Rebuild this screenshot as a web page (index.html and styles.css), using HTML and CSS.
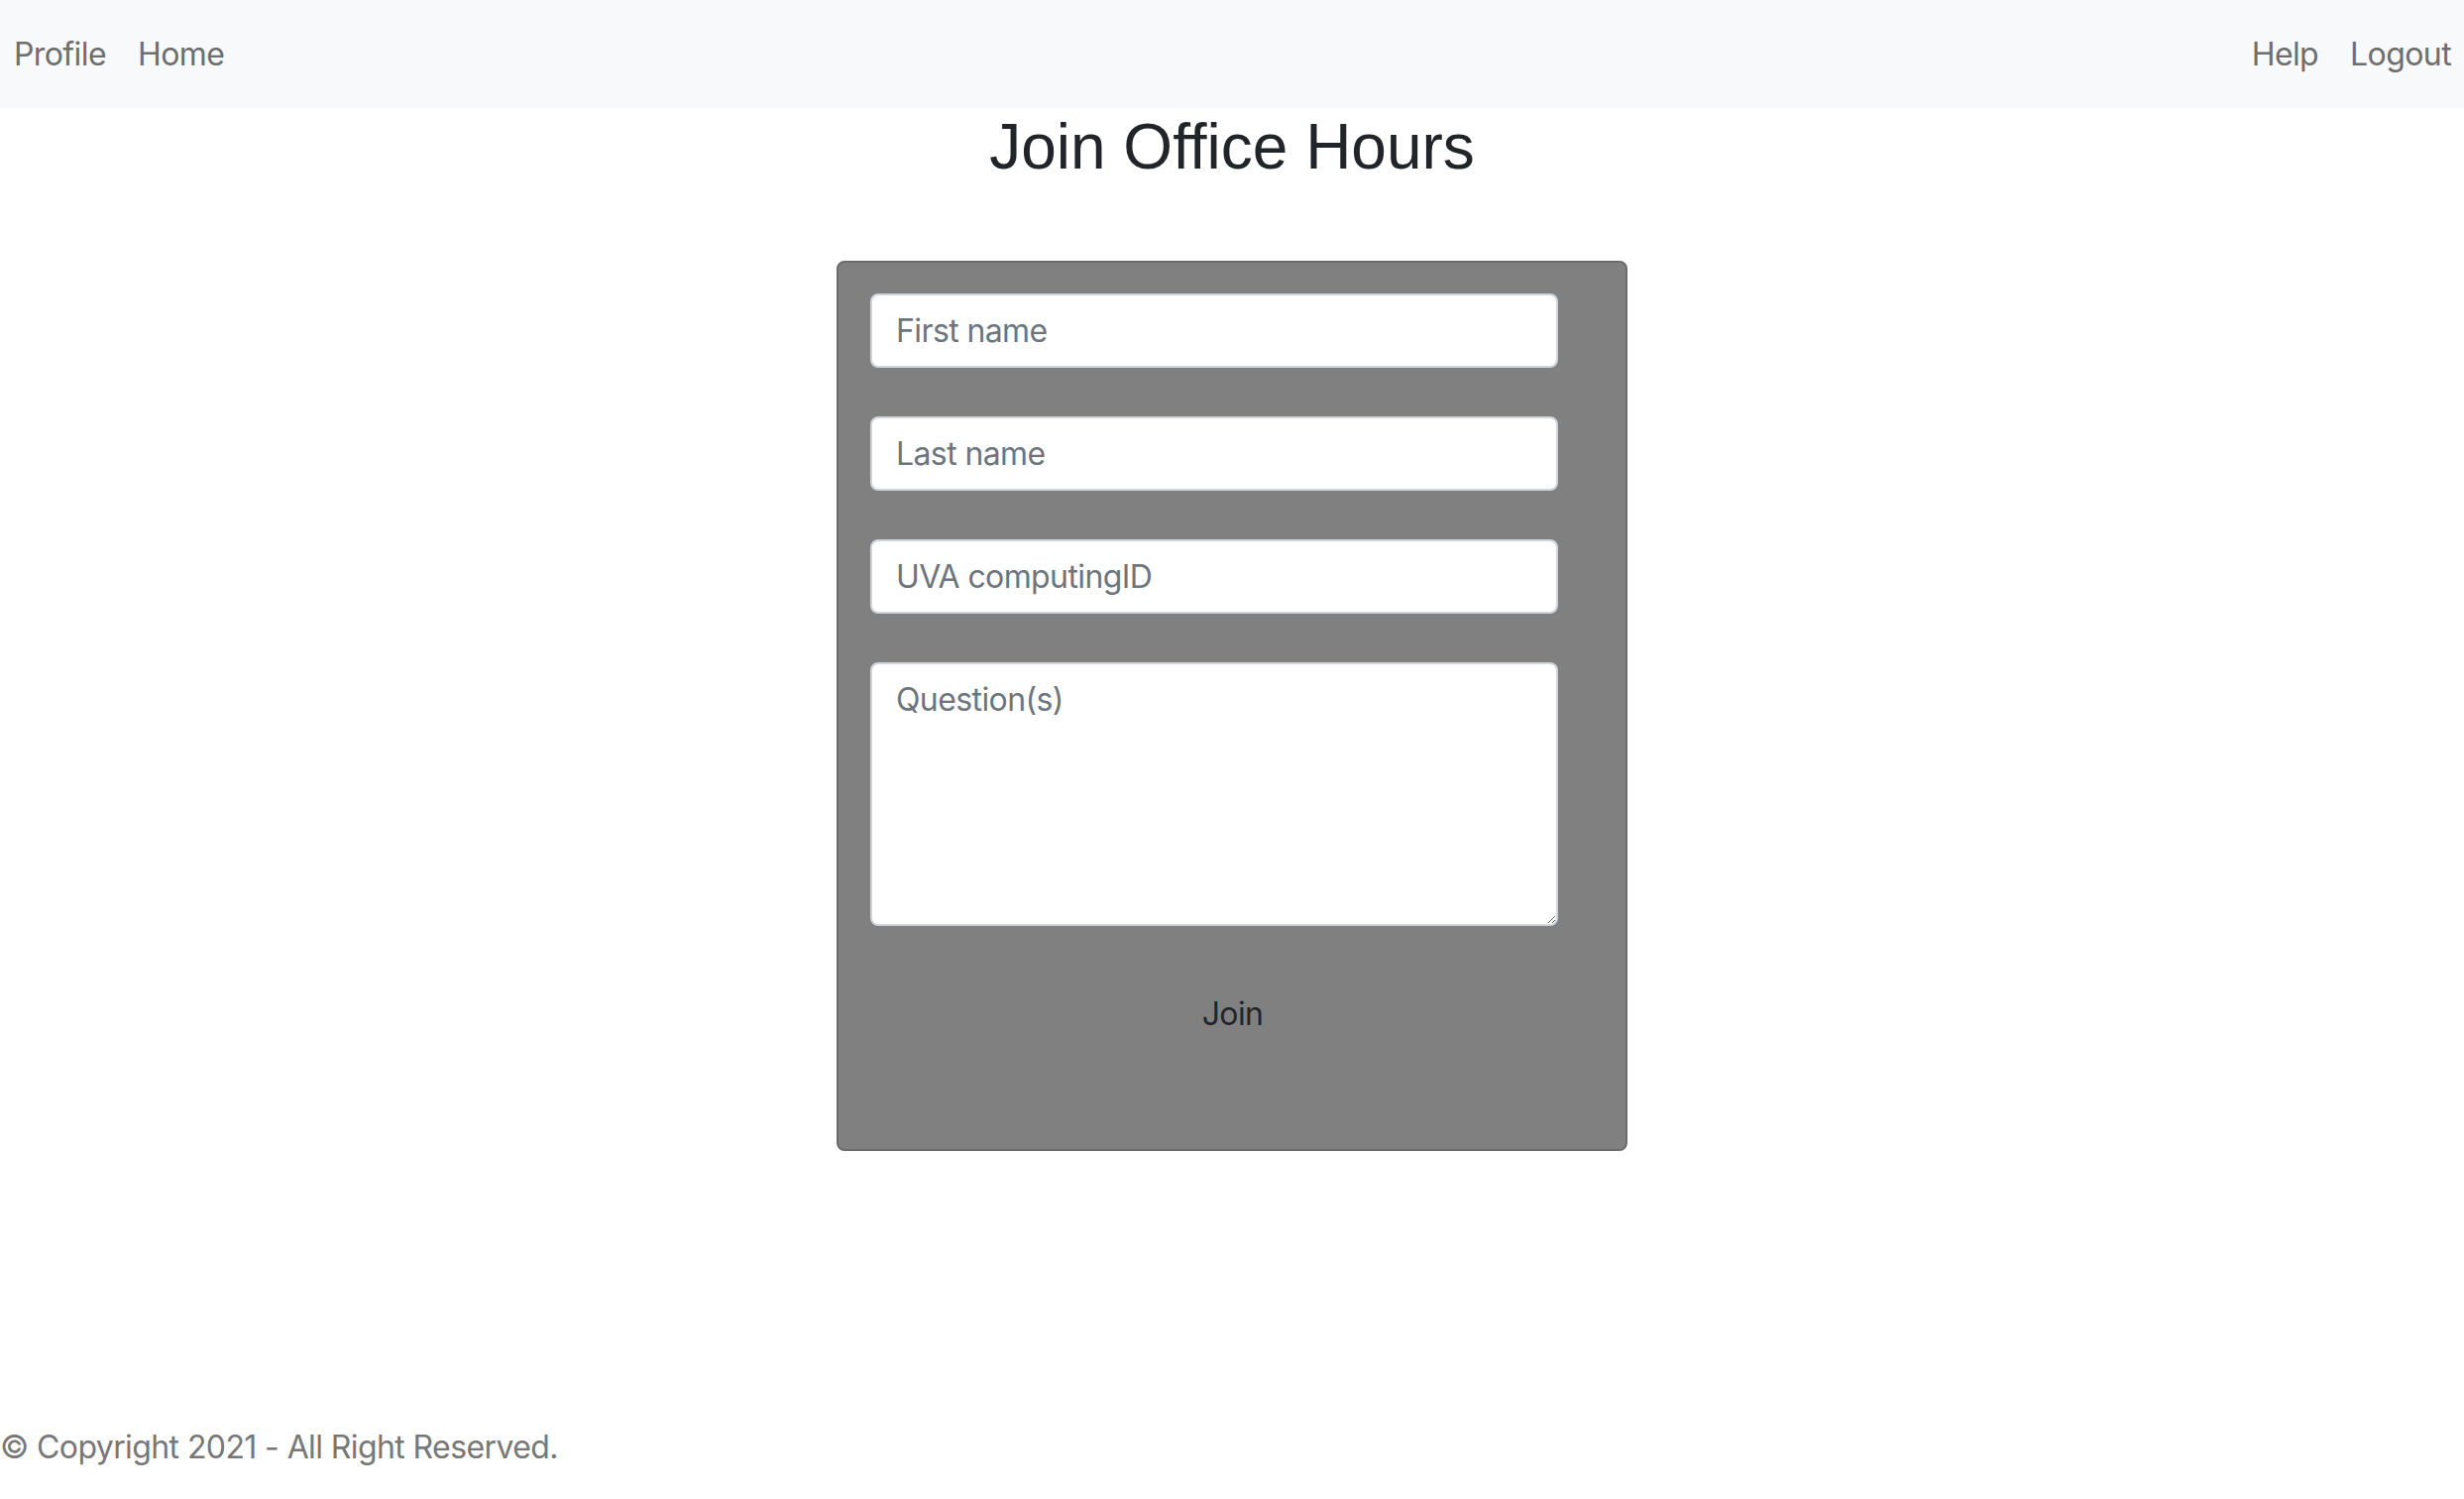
FILE: index.html
```html
<!DOCTYPE html>
<html lang="en">
<head>
<meta charset="utf-8">
<title>Join Office Hours</title>
<link rel="stylesheet" href="styles.css">
</head>
<body>
<nav class="navbar">
  <div class="nav-group">
    <a class="nav-link" href="#">Profile</a>
    <a class="nav-link" href="#">Home</a>
  </div>
  <div class="nav-group">
    <a class="nav-link" href="#">Help</a>
    <a class="nav-link" href="#">Logout</a>
  </div>
</nav>
<main class="main">
  <h1 class="title">Join Office Hours</h1>
  <form class="card">
    <input class="field" type="text" placeholder="First name">
    <input class="field" type="text" placeholder="Last name">
    <input class="field" type="text" placeholder="UVA computingID">
    <textarea class="field area" placeholder="Question(s)"></textarea>
    <button class="btn" type="button">Join</button>
  </form>
</main>
<footer class="footer">© Copyright 2021 - All Right Reserved.</footer>
</body>
</html>
```
FILE: styles.css
```css
html, body {
  margin: 0;
  padding: 0;
}
body {
  min-height: 100vh;
  display: flex;
  flex-direction: column;
  font-family: Inter, "Noto Sans", sans-serif;
  font-size: 32px;
  line-height: 48px;
  color: #212529;
  background: #fff;
}
.navbar {
  height: 109px;
  background: #f8f9fa;
  display: flex;
  align-items: center;
  justify-content: space-between;
  padding: 0 13px 0 14px;
  box-sizing: border-box;
}
.nav-group {
  display: flex;
  gap: 32px;
}
.nav-link {
  color: #6e6e6e;
  text-decoration: none;
  letter-spacing: -0.6px;
}
.main {
  display: flex;
  flex-direction: column;
  align-items: center;
}
.title {
  font-family: "Liberation Sans", Arial, sans-serif;
  font-weight: normal;
  font-size: 64px;
  line-height: normal;
  color: #212529;
  margin: 2px 0 78px;
}
.card {
  width: 798px;
  box-sizing: border-box;
  background: #808080;
  border: 2px solid #6b6b6b;
  border-radius: 8px;
  padding: 31px 31px 100px 32px;
  display: flex;
  flex-direction: column;
  align-items: flex-start;
}
.field {
  width: 694px;
  height: 75px;
  box-sizing: border-box;
  border: 2px solid #ced4da;
  border-radius: 8px;
  background: #fff;
  padding: 0 24px;
  font-family: Inter, "Noto Sans", sans-serif;
  font-size: 32px;
  color: #212529;
  margin: 0 0 49px;
  letter-spacing: -0.6px;
}
.field::placeholder {
  color: #6c757d;
}
.area {
  height: 266px;
  padding: 12px 24px;
  line-height: 48px;
  resize: vertical;
  margin-bottom: 53px;
}
.btn {
  align-self: center;
  background: transparent;
  border: none;
  padding: 12px 24px;
  font-family: Inter, "Noto Sans", sans-serif;
  font-size: 32px;
  line-height: 48px;
  color: #212529;
  letter-spacing: -0.6px;
}
.footer {
  margin-top: auto;
  margin-bottom: 28px;
  color: #777;
  letter-spacing: -0.6px;
}
```
